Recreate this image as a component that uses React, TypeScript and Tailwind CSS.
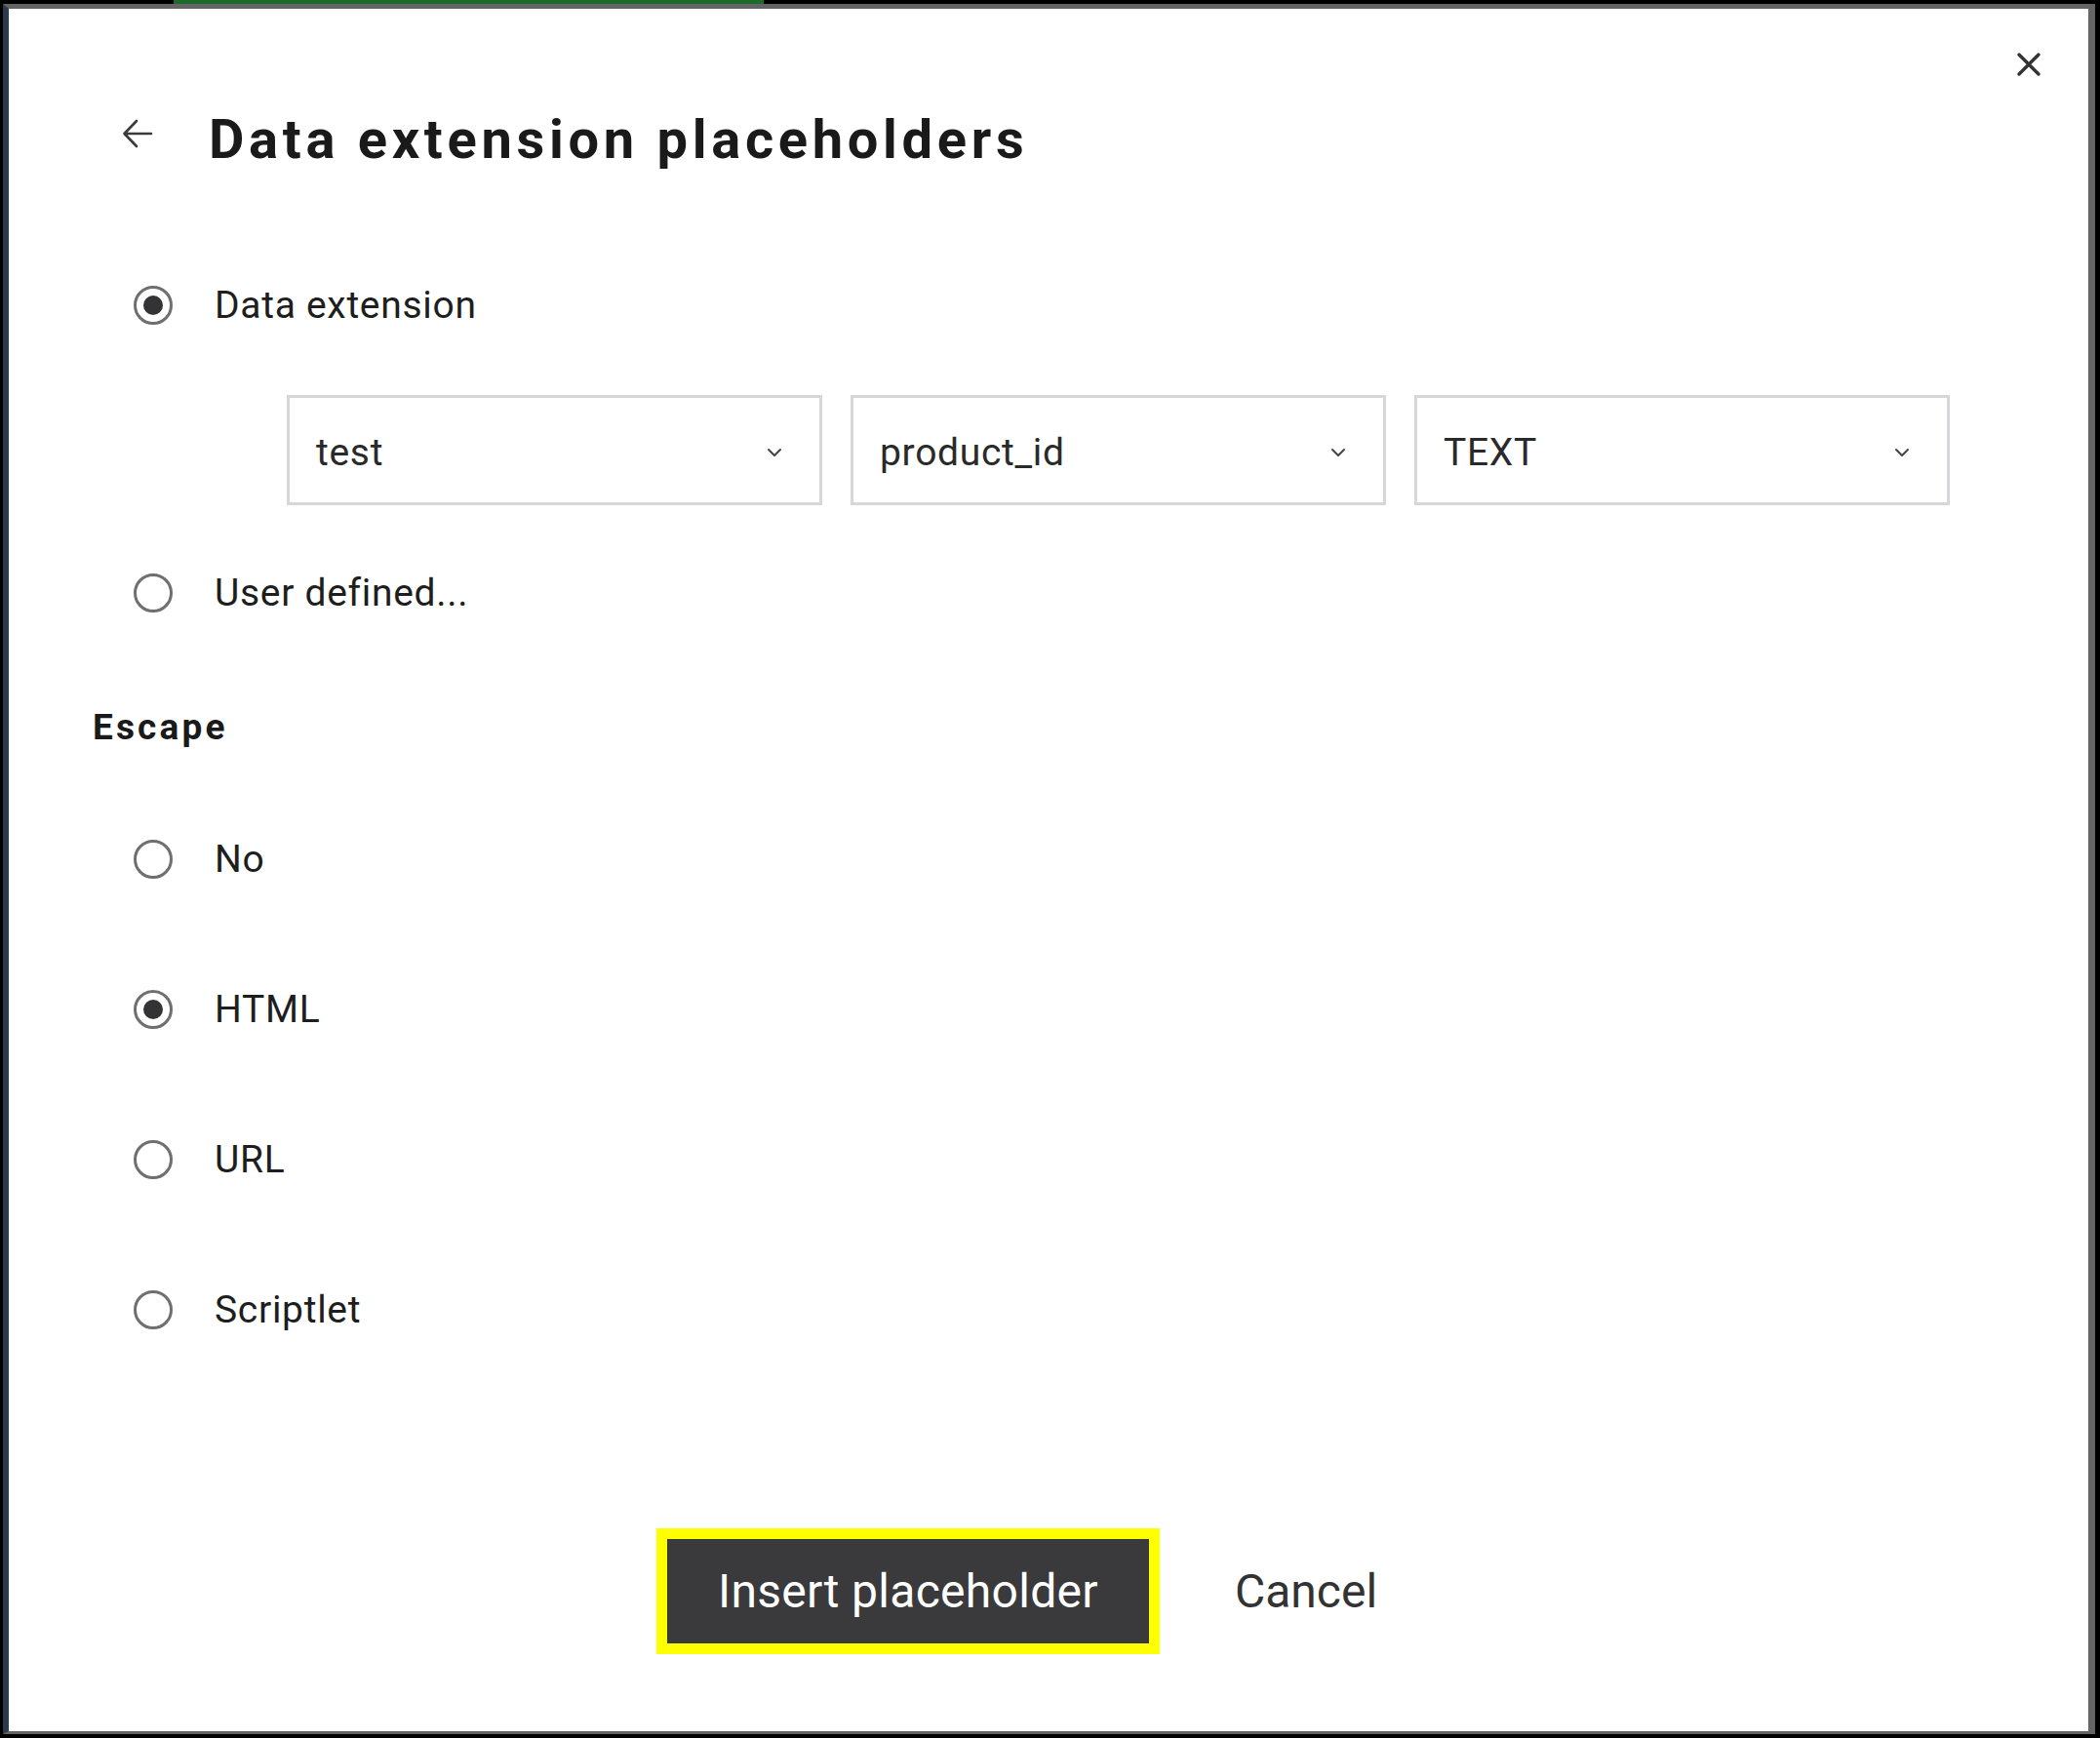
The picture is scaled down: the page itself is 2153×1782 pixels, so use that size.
import React from 'react'

const font = { fontFamily: 'Roboto, "Liberation Sans", sans-serif' }

function Radio({ checked }: { checked?: boolean }) {
  return (
    <span className="flex h-[40px] w-[40px] shrink-0 items-center justify-center rounded-full border-[3px] border-[#6f6f6f] bg-white">
      {checked && <span className="h-[20px] w-[20px] rounded-full bg-[#333336]" />}
    </span>
  )
}

function RadioRow({ label, checked }: { label: string; checked?: boolean }) {
  return (
    <div className="flex h-[60px] items-center gap-[43px] pl-[128px]">
      <Radio checked={checked} />
      <span className="text-[39px] leading-none tracking-[0.7px] text-[#1e1e1e]">{label}</span>
    </div>
  )
}

function Chevron() {
  return (
    <svg width="16" height="10" viewBox="0 0 16 10" fill="none">
      <path d="M2 2 L8 8 L14 2" stroke="#444" strokeWidth="2" strokeLinecap="round" strokeLinejoin="round" />
    </svg>
  )
}

function Select({ value }: { value: string }) {
  return (
    <div className="flex h-[113px] w-[549px] items-center justify-between border-[3px] border-[#d7d7da] bg-white pl-[27px] pr-[38px] pt-[5px]">
      <span className="text-[39px] leading-none tracking-[0.7px] text-[#2a2a2a]">{value}</span>
      <Chevron />
    </div>
  )
}

export default function App() {
  return (
    <div className="flex h-[1782px] w-[2153px] flex-col bg-black" style={font}>
      {/* top edge with the green progress strip */}
      <div className="flex h-[4px] shrink-0">
        <div className="w-[178px]" />
        <div className="w-[605px] bg-[#1d6b2b]" />
      </div>

      <div className="flex min-h-0 flex-1 pb-[4px] pl-[3px] pr-[5px]">
        <div className="relative flex flex-1 flex-col border-b-[3px] border-l-[6px] border-r-[7px] border-t-[5px] border-[#646464] border-l-[#2b3b4b] bg-white">
          {/* close */}
          <button className="absolute right-[48px] top-[44px]" aria-label="Close">
            <svg width="26" height="26" viewBox="0 0 26 26" fill="none">
              <path d="M3 3 L23 23 M23 3 L3 23" stroke="#333" strokeWidth="3.4" strokeLinecap="round" />
            </svg>
          </button>

          {/* header */}
          <div className="mt-[102px] flex h-[64px] items-start pl-[116px]">
            <svg className="mt-[10px]" width="32" height="32" viewBox="0 0 32 32" fill="none">
              <path d="M30 16 H3 M15 3 L2.5 16 L15 29" stroke="#3a3a3a" strokeWidth="2.6" strokeLinecap="round" strokeLinejoin="round" />
            </svg>
            <h1 className="ml-[57px] text-[56px] font-bold leading-[64px] tracking-[4.7px] text-[#1a1a1a]">
              Data extension placeholders
            </h1>
          </div>

          <div className="mt-[108px]">
            <RadioRow label="Data extension" checked />
          </div>

          <div className="mt-[62px] flex gap-[29px] pl-[285px]">
            <Select value="test" />
            <Select value="product_id" />
            <Select value="TEXT" />
          </div>

          <div className="mt-[60px]">
            <RadioRow label="User defined..." />
          </div>

          <h2 className="mt-[86px] pl-[86px] text-[37px] font-bold leading-[44px] tracking-[0.085em] text-[#1a1a1a]">
            Escape
          </h2>

          <div className="mt-[83px] flex flex-col gap-[94px]">
            <RadioRow label="No" />
            <RadioRow label="HTML" checked />
            <RadioRow label="URL" />
            <RadioRow label="Scriptlet" />
          </div>

          {/* footer */}
          <div className="mt-auto flex items-center gap-[77px] pb-[79px] pl-[664px]">
            <button className="flex h-[129px] w-[516px] items-center justify-center border-[11px] border-[#ffff00] bg-[#3a3a3c] text-[48px] tracking-[0.3px] text-white">
              Insert placeholder
            </button>
            <button className="text-[48px] text-[#333]">Cancel</button>
          </div>
        </div>
      </div>
    </div>
  )
}
